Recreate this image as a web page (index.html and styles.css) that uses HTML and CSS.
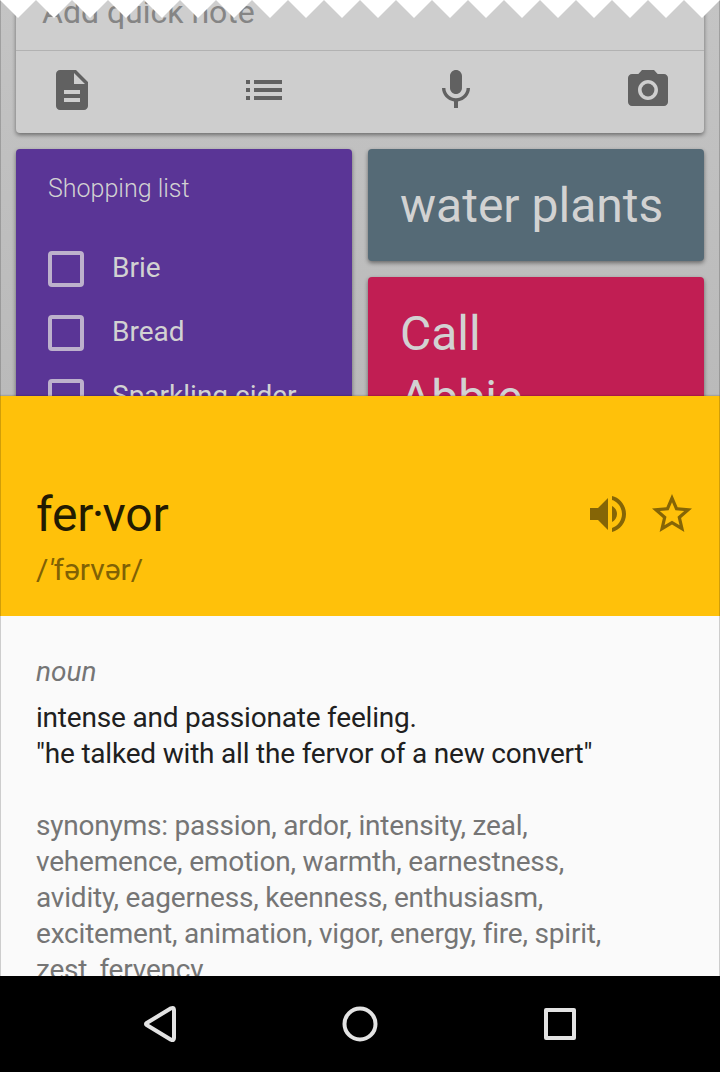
FILE: index.html
```html
<!DOCTYPE html>
<html lang="en">
<head>
<meta charset="utf-8">
<title>Notes</title>
<link rel="stylesheet" href="styles.css">
</head>
<body>
<div class="phone">
  <svg class="torn-edge" width="720" height="18" aria-hidden="true">
    <defs><pattern id="teeth" width="36" height="18" patternUnits="userSpaceOnUse"><path d="M0 0H36L18 18Z" fill="#fff"/></pattern></defs>
    <rect width="720" height="18" fill="url(#teeth)"/>
  </svg>
  <main class="notes">
    <section class="composer">
      <div class="prompt"><span class="prompt-text">Add quick note</span></div>
      <div class="tools">
        <svg class="icon" viewBox="0 0 24 24"><path d="M14 2H6c-1.100 0-2 .9-2 2v16c0 1.100.9 2 2 2h12c1.100 0 2-.9 2-2V8l-6-6zm2 16H8v-2h8v2zm0-4H8v-2h8v2zm-3-5V3.500L18.500 9H13z"/></svg>
        <svg class="icon" viewBox="0 0 24 24"><path d="M3 13h2v-2H3v2zm0 4h2v-2H3v2zm0-8h2V7H3v2zm4 4h14v-2H7v2zm0 4h14v-2H7v2zM7 7v2h14V7H7z"/></svg>
        <svg class="icon" viewBox="0 0 24 24"><path d="M12 14c1.660 0 2.990-1.340 2.990-3L15 5c0-1.660-1.340-3-3-3S9 3.340 9 5v6c0 1.660 1.340 3 3 3zm5.300-3c0 3-2.540 5.100-5.300 5.100S6.700 14 6.700 11H5c0 3.410 2.720 6.230 6 6.720V21h2v-3.280c3.280-.48 6-3.300 6-6.720h-1.700z"/></svg>
        <svg class="icon" viewBox="0 0 24 24"><circle cx="12" cy="12" r="3.200"/><path d="M9 2L7.170 4H4c-1.100 0-2 .9-2 2v12c0 1.100.9 2 2 2h16c1.100 0 2-.9 2-2V6c0-1.100-.9-2-2-2h-3.170L15 2H9zm3 15c-2.760 0-5-2.240-5-5s2.240-5 5-5 5 2.240 5 5-2.240 5-5 5z"/></svg>
      </div>
    </section>
    <div class="board">
      <section class="note shopping">
        <div class="list-title">Shopping list</div>
        <div class="item"><span class="box"></span><span class="label">Brie</span></div>
        <div class="item"><span class="box"></span><span class="label">Bread</span></div>
        <div class="item"><span class="box"></span><span class="label">Sparkling cider</span></div>
      </section>
      <div class="column">
        <section class="note plants">water plants</section>
        <section class="note call">Call<br>Abbie</section>
      </div>
    </div>
  </main>
  <section class="sheet">
    <header class="word">
      <div class="names">
        <div class="term">fer<span class="dot">·</span>vor</div>
        <div class="phonetic">/<span class="stress">′</span>fərvər/</div>
      </div>
      <div class="actions">
        <svg class="icon" viewBox="0 0 24 24"><path d="M3 9v6h4l5 5V4L7 9H3zm13.500 3c0-1.770-1.020-3.290-2.500-4.030v8.050c1.480-.73 2.500-2.250 2.500-4.020zM14 3v2.060c2.890.86 5 3.770 5 6.940s-2.110 6.080-5 6.940V21c4.010-.91 7-4.720 7-9s-2.990-8.090-7-9z"/></svg>
        <svg class="icon" viewBox="0 0 24 24"><path d="M22 9.240l-7.190-.62L12 2 9.190 8.630 2 9.240l5.460 4.730L5.820 21 12 17.270 18.180 21l-1.630-7.030L22 9.240zM12 15.400l-3.760 2.270 1-4.280-3.320-2.880 4.380-.38L12 6.100l1.710 4.040 4.380.38-3.320 2.880 1 4.280L12 15.400z"/></svg>
      </div>
    </header>
    <div class="definition">
      <div class="kind">noun</div>
      <div class="meaning">intense and passionate feeling.<br>"he talked with all the fervor of a new convert"</div>
      <div class="synonyms">synonyms: passion, ardor, intensity, zeal,<br>vehemence, emotion, warmth, earnestness,<br>avidity, eagerness, keenness, enthusiasm,<br>excitement, animation, vigor, energy, fire, spirit,<br>zest, fervency</div>
    </div>
  </section>
  <nav class="navbar">
    <svg class="nav-icon" viewBox="0 0 48 48"><path d="M10.700 23 L35 8.300 Q38 7 38 10 V38 Q38 41 35 39.700 L10.700 25 Q9.200 24 10.700 23Z"/></svg>
    <svg class="nav-icon" viewBox="0 0 48 48"><circle cx="24" cy="24" r="15.500"/></svg>
    <svg class="nav-icon" viewBox="0 0 48 48"><rect x="10" y="10" width="28" height="28"/></svg>
  </nav>
</div>
</body>
</html>
```
FILE: styles.css
```css
* { box-sizing: border-box; }
body { margin: 0; background: #fff; font-family: Roboto, "Liberation Sans", sans-serif; }
.phone { position: relative; width: 720px; height: 1072px; overflow: hidden; display: flex; flex-direction: column; }
.phone::after { content: ""; position: absolute; inset: 0 0 96px; border: solid rgba(0, 0, 0, .18); border-width: 0 1px; }
.torn-edge { position: absolute; top: 0; left: 0; z-index: 3; }
.notes { height: 396px; flex: none; overflow: hidden; padding: 0 16px; background: linear-gradient(#c4c4c4, #bababa); }
.composer { height: 133px; background: #cecece; border-radius: 0 0 4px 4px; box-shadow: 0 2px 4px rgba(0, 0, 0, .45); }
.prompt { height: 51px; display: flex; align-items: flex-start; padding-left: 26px; border-bottom: 1px solid #b2b2b2; overflow: hidden; }
.prompt-text { font-size: 32px; line-height: 40px; margin-top: -8px; color: #858585; white-space: nowrap; }
.tools { display: flex; justify-content: space-between; padding: 14.500px 32px 0; }
.icon { display: block; width: 48px; height: 48px; fill: #616161; }
.board { display: grid; grid-template-columns: 1fr 1fr; gap: 16px; margin-top: 16px; align-items: start; }
.column { display: flex; flex-direction: column; gap: 16px; }
.note { padding: 24px 32px; border-radius: 4px; box-shadow: 0 2px 4px rgba(0, 0, 0, .45); color: #d2d2d2; }
.shopping { height: 300px; background: #5a3596; }
.list-title { font-size: 25px; line-height: 32px; font-weight: 300; margin-bottom: 32px; }
.item { height: 64px; display: flex; align-items: center; gap: 28px; }
.box { width: 36px; height: 36px; border: 4px solid #bdb1cc; border-radius: 4px; }
.label { font-size: 28px; line-height: 36px; padding-bottom: 2px; }
.plants, .call { padding: 25px 32px 23px; font-size: 48px; line-height: 64px; white-space: nowrap; }
.plants { background: #556a76; }
.call { background: #c11e53; }
.sheet { position: relative; height: 580px; flex: none; overflow: hidden; background: #fafafa; box-shadow: 0 0 2px rgba(0, 0, 0, .4); }
.word { height: 220px; display: flex; justify-content: space-between; padding: 91px 24px 0 36px; background: #ffc10a; }
.term { font-size: 48px; line-height: 56px; letter-spacing: -.2px; color: #231b02; }
.dot { margin: 0 -1.500px; }
.phonetic { font-size: 30px; line-height: 36px; margin-top: 9px; color: #806105; }
.stress { font-style: italic; }
.actions { display: flex; gap: 16px; padding-top: 3px; }
.actions .icon { fill: #856506; }
.definition { padding: 38px 36px 0; font-size: 28px; line-height: 36px; letter-spacing: -.2px; white-space: nowrap; color: #757575; }
.kind { font-style: italic; margin-bottom: 10px; letter-spacing: 0; }
.meaning { color: #202020; margin-bottom: 36px; }
.navbar { height: 96px; display: flex; justify-content: center; align-items: center; gap: 152px; background: #000; }
.nav-icon { width: 48px; height: 48px; fill: none; stroke: #e3e3e3; stroke-width: 4; stroke-linejoin: round; }
```
